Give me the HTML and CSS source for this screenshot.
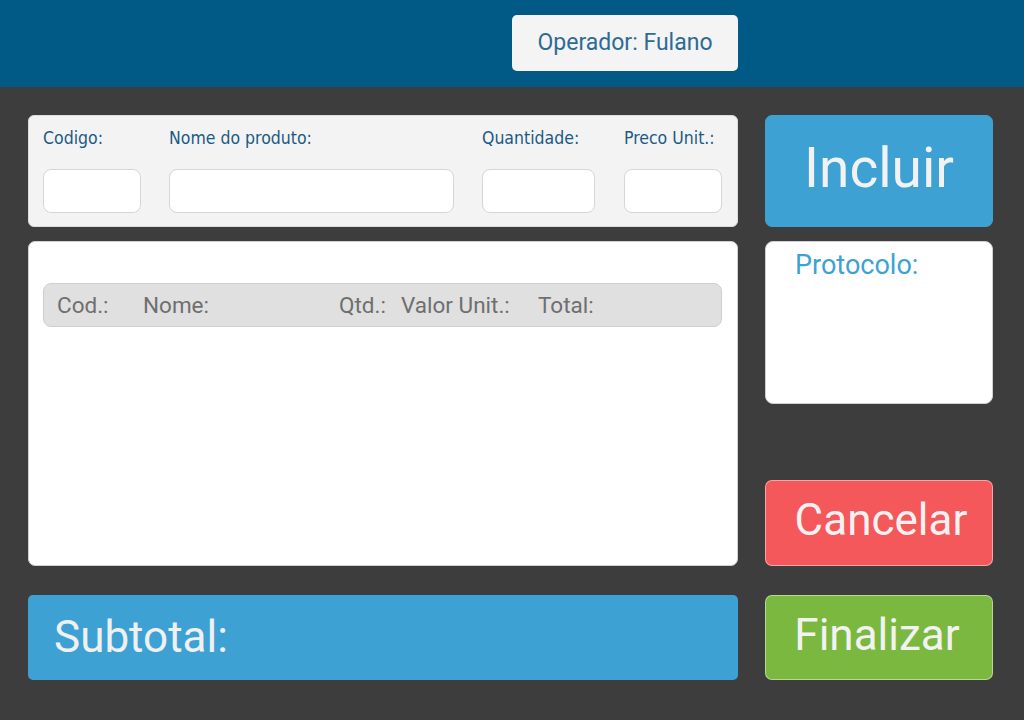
FILE: index.html
```html
<!DOCTYPE html>
<html lang="pt">
<head>
<meta charset="utf-8">
<title>PDV</title>
<link rel="stylesheet" href="styles.css">
</head>
<body>
<header class="topbar">
  <div class="operator">Operador: Fulano</div>
</header>
<main class="main">
  <section class="left">
    <div class="form-card">
      <div class="field f-cod"><label class="lbl">Codigo:</label><div class="input"></div></div>
      <div class="field f-nome"><label class="lbl">Nome do produto:</label><div class="input"></div></div>
      <div class="field f-qtd"><label class="lbl">Quantidade:</label><div class="input"></div></div>
      <div class="field f-preco"><label class="lbl">Preco Unit.:</label><div class="input"></div></div>
    </div>
    <div class="list-card">
      <div class="list-head">
        <span>Cod.:</span><span>Nome:</span><span>Qtd.:</span><span>Valor Unit.:</span><span>Total:</span>
      </div>
    </div>
    <div class="subtotal">Subtotal:</div>
  </section>
  <aside class="right">
    <button class="btn btn-blue btn-incluir">Incluir</button>
    <div class="protocolo">Protocolo:</div>
    <div class="spacer"></div>
    <button class="btn btn-red">Cancelar</button>
    <button class="btn btn-green">Finalizar</button>
  </aside>
</main>
</body>
</html>
```
FILE: styles.css
```css
html, body {
  margin: 0;
  padding: 0;
}
body {
  width: 1024px;
  height: 720px;
  background: #3d3d3d;
  font-family: Roboto, "Liberation Sans", sans-serif;
  overflow: hidden;
}
.topbar {
  height: 87px;
  background: #005a85;
  display: flex;
  align-items: flex-start;
  padding-left: 512px;
  box-sizing: border-box;
  padding-top: 15px;
}
.operator {
  width: 226px;
  height: 56px;
  background: #f4f4f4;
  border-radius: 5px;
  color: #2d6b95;
  font-size: 23px;
  display: flex;
  align-items: center;
  justify-content: center;
  padding-bottom: 2px;
  box-sizing: border-box;
}
.main {
  display: flex;
  gap: 27px;
  padding: 28px 0 0 28px;
}
.left {
  width: 710px;
  display: flex;
  flex-direction: column;
}
.right {
  width: 228px;
  display: flex;
  flex-direction: column;
}
.form-card {
  height: 112px;
  box-sizing: border-box;
  background: #f3f3f3;
  border: 1px solid #dcdcdc;
  border-radius: 6px;
  padding: 12px 0 0 14px;
  display: flex;
  gap: 28px;
}
.field {
  display: flex;
  flex-direction: column;
  gap: 21px;
}
.f-cod { width: 98px; }
.f-nome { width: 285px; }
.f-qtd { width: 113px; margin-right: 1px; }
.f-preco { width: 98px; }
.lbl {
  font-family: "DejaVu Sans Condensed", "DejaVu Sans", Verdana, sans-serif;
  font-stretch: condensed;
  font-size: 17.5px;
  line-height: 20px;
  color: #1b5a84;
  white-space: nowrap;
}
.input {
  height: 44px;
  box-sizing: border-box;
  background: #fff;
  border: 1px solid #d6d6d6;
  border-radius: 8px;
}
.list-card {
  margin-top: 14px;
  height: 325px;
  box-sizing: border-box;
  background: #fff;
  border: 1px solid #d0d0d0;
  border-radius: 7px;
  padding: 41px 15px 0 14px;
}
.list-head {
  height: 44px;
  box-sizing: border-box;
  background: #e0e0e0;
  border: 1px solid #cfcfcf;
  border-radius: 8px;
  display: grid;
  grid-template-columns: 86px 196px 62px 137px 1fr;
  align-items: center;
  padding: 0 0 1px 13px;
  color: #6f6f6f;
  font-size: 22.5px;
}
.subtotal {
  margin-top: 29px;
  height: 85px;
  box-sizing: border-box;
  background: #3da2d3;
  border-radius: 5px;
  color: #f0f0f0;
  font-size: 44px;
  display: flex;
  align-items: center;
  padding: 0 0 2px 26px;
}
.btn {
  font-family: Roboto, "Liberation Sans", sans-serif;
  color: #f2f2f2;
  border: 1px solid rgba(255,255,255,0.45);
  border-radius: 7px;
  width: 228px;
  display: flex;
  align-items: center;
  justify-content: center;
  box-sizing: border-box;
  cursor: pointer;
}
.btn-incluir {
  height: 112px;
  font-size: 55px;
  padding-bottom: 8px;
  border-color: #3da2d3;
}
.btn-blue { background: #3da2d3; }
.btn-red {
  height: 86px;
  background: #f5585a;
  font-size: 44px;
  padding: 0 0 7px 4px;
}
.btn-green {
  margin-top: 29px;
  height: 85px;
  background: #7ab83f;
  font-size: 44px;
  padding: 0 4px 6px 0;
}
.protocolo {
  margin-top: 14px;
  height: 163px;
  box-sizing: border-box;
  background: #fff;
  border: 1px solid #d0d0d0;
  border-radius: 8px;
  color: #3da2d3;
  font-size: 27px;
  line-height: 32px;
  padding: 7px 0 0 29px;
}
.spacer {
  height: 76px;
}
```
